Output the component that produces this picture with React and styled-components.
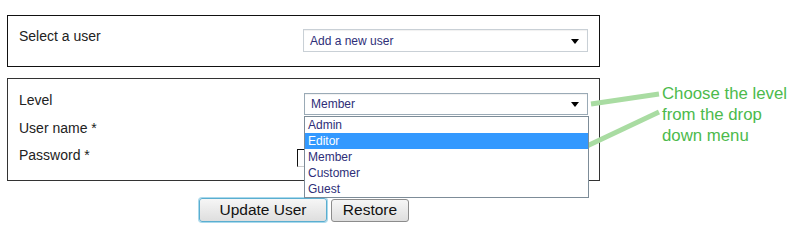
import React from "react";
import styled, { createGlobalStyle } from "styled-components";

const GlobalStyle = createGlobalStyle`
  body {
    margin: 0;
    background: #ffffff;
    font-family: "Liberation Sans", Arial, sans-serif;
  }
`;

const Page = styled.div`
  position: relative;
  display: flex;
  align-items: flex-start;
  padding: 15px 0 0 7px;
  width: 805px;
  height: 249px;
  box-sizing: border-box;
`;

const Column = styled.div`
  width: 593px;
`;

const Box = styled.div`
  border: 1px solid ${(p) => p.$border || "#111"};
  margin-top: ${(p) => p.$top || 0}px;
  padding: ${(p) => p.$pad};
  display: grid;
  grid-template-columns: ${(p) => p.$cols};
`;

const Label = styled.div`
  font-size: 14px;
  color: #222;
  line-height: ${(p) => p.$lh || 16}px;
  margin-top: ${(p) => p.$mt || 0}px;
`;

const Field = styled.div`
  position: relative;
  padding-top: ${(p) => p.$pt || 0}px;
`;

const Select = styled.div`
  width: ${(p) => p.$w}px;
  height: ${(p) => p.$h}px;
  margin-left: ${(p) => p.$ml || 0}px;
  box-sizing: border-box;
  border: 1px solid ${(p) => p.$border};
  box-shadow: inset 0 1px 1px rgba(0, 0, 0, 0.06);
  display: flex;
  align-items: center;
  justify-content: space-between;
  padding: 0 8px 0 6px;
  font-size: 12px;
  color: #2e2e78;
  background: #fff;
`;

const Arrow = styled.span`
  width: 0;
  height: 0;
  border-left: 4px solid transparent;
  border-right: 4px solid transparent;
  border-top: 5px solid #000;
  margin-top: 1px;
`;

const Menu = styled.ul`
  position: absolute;
  left: 7px;
  top: 29px;
  width: 283px;
  margin: 0;
  padding: 0;
  list-style: none;
  border: 1px solid #7d8c98;
  background: #fff;
  z-index: 2;
`;

const MenuItem = styled.li`
  height: 16px;
  line-height: 16px;
  padding-left: 3px;
  font-size: 12px;
  color: ${(p) => (p.$active ? "#fff" : "#2e2e78")};
  background: ${(p) => (p.$active ? "#3399ff" : "transparent")};
`;

const Input = styled.div`
  width: 160px;
  height: 18px;
  box-sizing: border-box;
  border: 1px solid #111;
  border-right-color: #aaa;
  border-bottom-color: #ccc;
`;

const Buttons = styled.div`
  display: flex;
  justify-content: center;
  align-items: center;
  gap: 4px;
  margin-top: 17px;
  padding-left: 1px;
`;

const Button = styled.button`
  height: ${(p) => (p.$focus ? 24 : 23)}px;
  width: ${(p) => p.$w}px;
  font-family: "Liberation Sans", Arial, sans-serif;
  font-size: 15.5px;
  color: #111;
  border-radius: 3px;
  border: 1px solid ${(p) => (p.$focus ? "#5aaed0" : "#8c8c8c")};
  box-shadow: ${(p) => (p.$focus ? "0 0 0 1px #a9d9ec" : "none")};
  background: linear-gradient(#f6f6f6, #dedede);
  padding: 0;
`;

const Note = styled.div`
  margin: 68px 0 0 62px;
  font-size: 16.8px;
  line-height: 21px;
  color: #4cba4c;
  white-space: nowrap;
`;

const Pointers = styled.svg`
  position: absolute;
  left: 0;
  top: 0;
  pointer-events: none;
`;

const levels = ["Admin", "Editor", "Member", "Customer", "Guest"];

export default function App() {
  return (
    <>
      <GlobalStyle />
      <Page>
        <Column>
          <Box $pad="13px 11px 14px 11px" $cols="284px 285px">
            <Label $mt={-1}>Select a user</Label>
            <Select $w={285} $h={23} $border="#c9d0d6">
              Add a new user
              <Arrow />
            </Select>
          </Box>
          <Box $top={11} $border="#333" $pad="8px 11px 11px 11px" $cols="278px 292px">
            <Label $lh={27}>Level</Label>
            <Field $pt={6}>
              <Select $w={284} $h={22} $ml={7} $border="#9aaab6">
                Member
                <Arrow />
              </Select>
              <Menu>
                {levels.map((l) => (
                  <MenuItem key={l} $active={l === "Editor"}>
                    {l}
                  </MenuItem>
                ))}
              </Menu>
            </Field>
            <Label $lh={27}>User name *</Label>
            <Field />
            <Label $lh={27}>Password *</Label>
            <Field $pt={7}>
              <Input />
            </Field>
          </Box>
          <Buttons>
            <Button $focus $w={128}>Update User</Button>
            <Button $w={78}>Restore</Button>
          </Buttons>
        </Column>
        <Note>
          Choose the level
          <br />
          from the drop
          <br />
          down menu
        </Note>
        <Pointers width="805" height="249">
          <line x1="591" y1="104" x2="659" y2="94" stroke="#a9dca2" strokeWidth="5" />
          <line x1="587" y1="146" x2="659" y2="112" stroke="#a9dca2" strokeWidth="5" />
        </Pointers>
      </Page>
    </>
  );
}
